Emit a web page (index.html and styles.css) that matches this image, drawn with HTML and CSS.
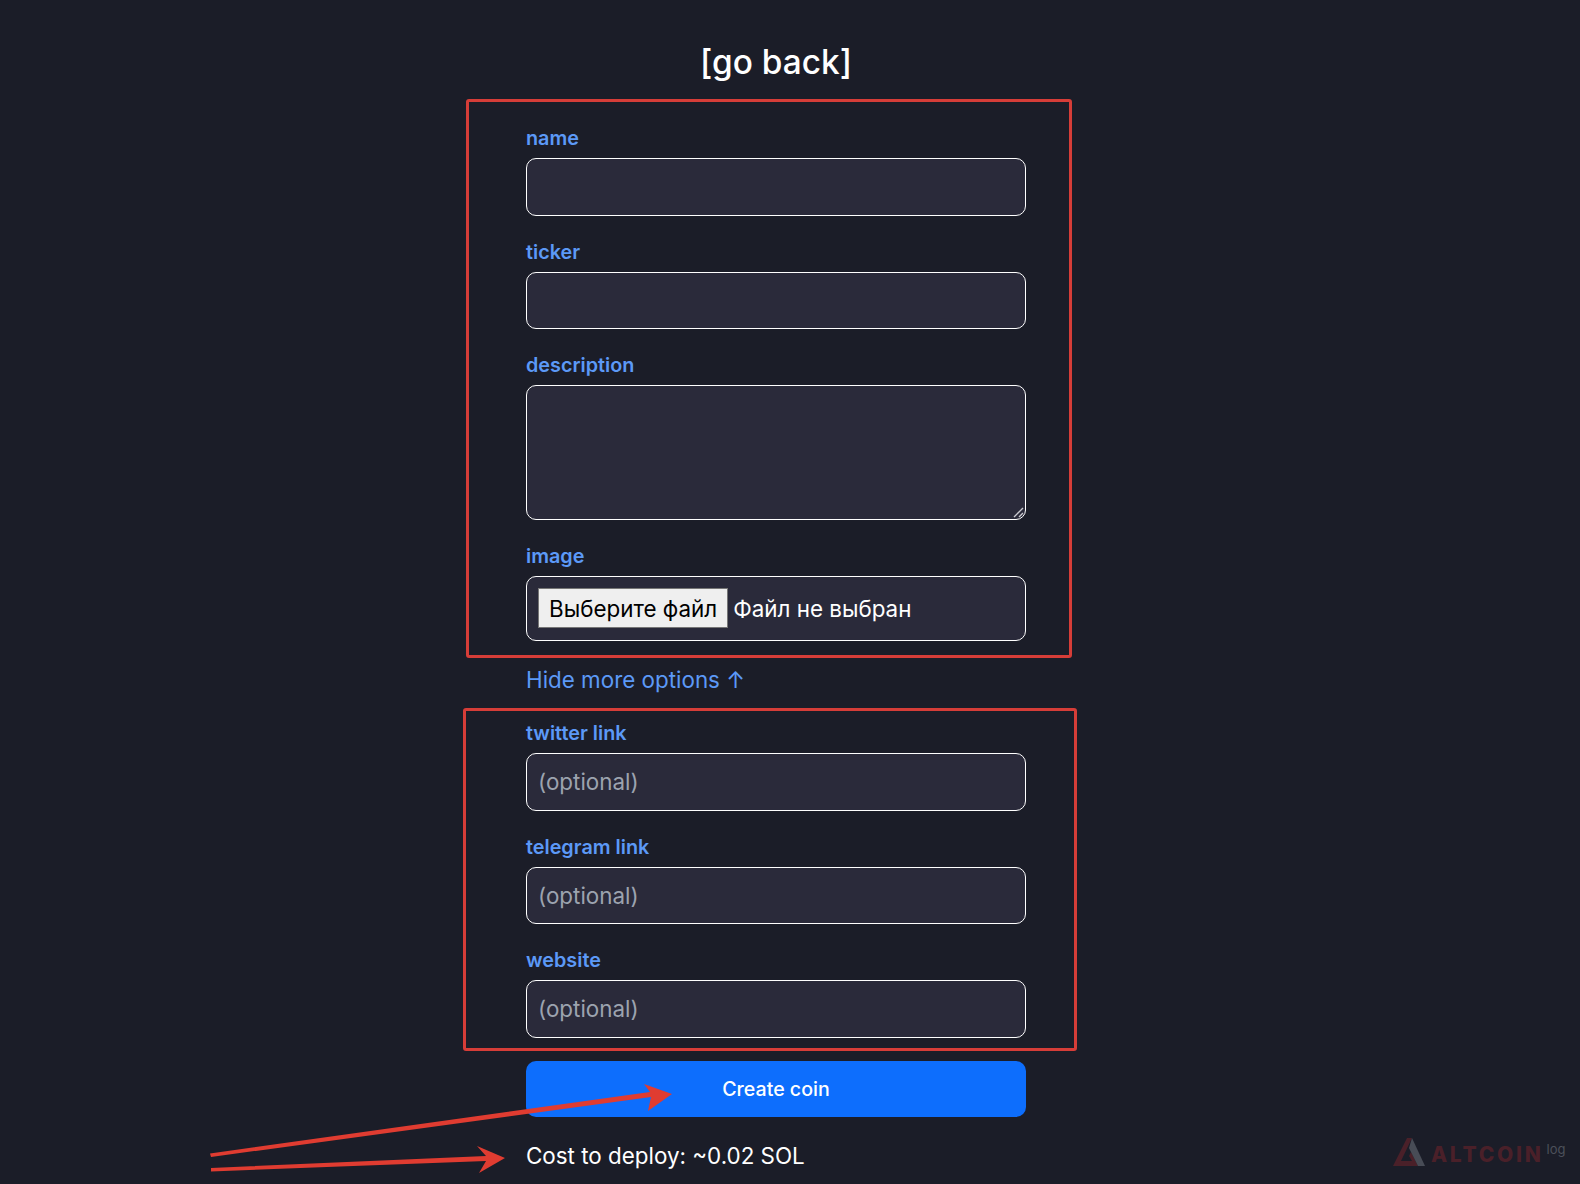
FILE: index.html
```html
<!DOCTYPE html>
<html lang="en">
<head>
    <meta charset="UTF-8">
    <title>Create coin</title>
    <link rel="stylesheet" href="styles.css">
</head>
<body>

<div class="container">
    <a class="go-back" href="#">[go back]</a>

    <form class="coin-form">
        <div class="field">
            <label class="field-label">name</label>
            <input class="field-input" type="text">
        </div>
        <div class="field">
            <label class="field-label">ticker</label>
            <input class="field-input" type="text">
        </div>
        <div class="field">
            <label class="field-label">description</label>
            <div class="textarea-wrap">
                <textarea class="field-input field-textarea"></textarea>
                <svg class="resize-grip" width="12" height="12" viewBox="0 0 12 12">
                    <path d="M1 10 L10 1 M6 10 L10 6" stroke="#c9c9cf" stroke-width="1.4" fill="none"/>
                </svg>
            </div>
        </div>
        <div class="field">
            <label class="field-label">image</label>
            <div class="field-input file-input">
                <button class="file-button" type="button">Выберите файл</button>
                <span class="file-name">Файл не выбран</span>
            </div>
        </div>

        <div class="more-options">Hide more options ↑</div>

        <div class="field">
            <label class="field-label">twitter link</label>
            <input class="field-input" type="text" placeholder="(optional)">
        </div>
        <div class="field">
            <label class="field-label">telegram link</label>
            <input class="field-input" type="text" placeholder="(optional)">
        </div>
        <div class="field">
            <label class="field-label">website</label>
            <input class="field-input" type="text" placeholder="(optional)">
        </div>

        <button class="create-button" type="button">Create coin</button>
        <div class="cost">Cost to deploy: ~0.02 SOL</div>
    </form>
</div>

<!-- red annotations drawn over the page -->
<div class="mark mark-top"></div>
<div class="mark mark-bottom"></div>
<svg class="arrows" width="1580" height="1184" viewBox="0 0 1580 1184">
    <path d="M210 1153.5 L650 1092 L644 1084 L672 1094 L648 1111 L651 1097 L211 1157 Z" fill="#e03c31"/>
    <path d="M211 1168 L486 1156 L477 1146 L505 1158 L479 1173 L486 1161 L211 1171.5 Z" fill="#e03c31"/>
</svg>

<div class="watermark">
    <svg class="watermark-logo" width="34" height="30" viewBox="0 0 34 30">
        <path d="M1 29 L15 1 L20 1 L9 24 L20 24 L17 19 L19 15 L26 29 Z" fill="#4a2029"/>
        <path d="M20 1 L33 29 L26 29 L17 11 Z" fill="#484c56"/>
    </svg>
    <span class="watermark-name">ALTCOIN</span>
    <span class="watermark-log">log</span>
</div>

</body>
</html>
```

FILE: styles.css
```css
* {
    box-sizing: border-box;
}

html, body {
    margin: 0;
    height: 1184px;
    overflow: hidden;
}

body {
    background-color: #1b1d28;
    font-family: "Inter", sans-serif;
    padding-right: 28px;
    position: relative;
}

.container {
    width: 500px;
    margin: 0 auto;
    padding-top: 35px;
    display: flex;
    flex-direction: column;
    align-items: center;
}

.go-back {
    color: white;
    font-size: 33.4px;
    font-weight: 500;
    line-height: 54px;
    text-decoration: none;
}

.coin-form {
    width: 100%;
    margin-top: 37px;
    display: flex;
    flex-direction: column;
}

.field {
    margin-bottom: 24px;
}

.field-label {
    display: block;
    color: #5c99f7;
    font-size: 19.8px;
    font-weight: 600;
    line-height: 24px;
    margin-bottom: 8px;
}

.field-input {
    display: block;
    width: 100%;
    height: 57.5px;
    padding: 0 11px;
    background-color: #2a2a3a;
    border: 1px solid white;
    border-radius: 10px;
    color: white;
    font-family: inherit;
    font-size: 22.4px;
    outline: none;
}

.field-input::placeholder {
    color: #9ca3af;
    opacity: 1;
}

.textarea-wrap {
    position: relative;
}

.field-textarea {
    height: 135px;
    resize: none;
}

.resize-grip {
    position: absolute;
    right: 1px;
    bottom: 1px;
}

.file-input {
    height: 64.5px;
    display: flex;
    align-items: center;
}

.file-button {
    height: 40px;
    padding: 0 10px;
    background-color: #efefef;
    border: 1px solid #767676;
    border-radius: 0;
    color: black;
    font-family: inherit;
    font-size: 22.4px;
    margin-right: 5px;
    white-space: nowrap;
}

.file-name {
    color: white;
    font-size: 22.4px;
}

.more-options {
    color: #5c99f7;
    font-size: 22.4px;
    line-height: 30px;
    margin-bottom: 26.5px;
}

.create-button {
    height: 56px;
    margin-top: -0.5px;
    background-color: #0d6efd;
    border: 0;
    border-radius: 10px;
    color: white;
    font-family: inherit;
    font-size: 19.6px;
    font-weight: 500;
}

.cost {
    color: white;
    font-size: 22.4px;
    line-height: 30px;
    margin-top: 24px;
}

.mark {
    position: absolute;
    border: 3px solid #d63d38;
    border-radius: 3px;
}

.mark-top {
    left: 466px;
    top: 99px;
    width: 606px;
    height: 559px;
}

.mark-bottom {
    left: 463px;
    top: 708px;
    width: 614px;
    height: 343px;
}

.arrows {
    position: absolute;
    left: 0;
    top: 0;
}

.watermark {
    position: absolute;
    left: 1392px;
    top: 1137px;
    display: flex;
    align-items: flex-start;
}

.watermark-name {
    color: #4a2029;
    font-size: 21px;
    font-weight: 800;
    letter-spacing: 2.7px;
    line-height: 24px;
    margin: 6px 0 0 5px;
}

.watermark-log {
    color: #4c505a;
    font-size: 13px;
    line-height: 14px;
    margin: 5px 0 0 3px;
}
```
